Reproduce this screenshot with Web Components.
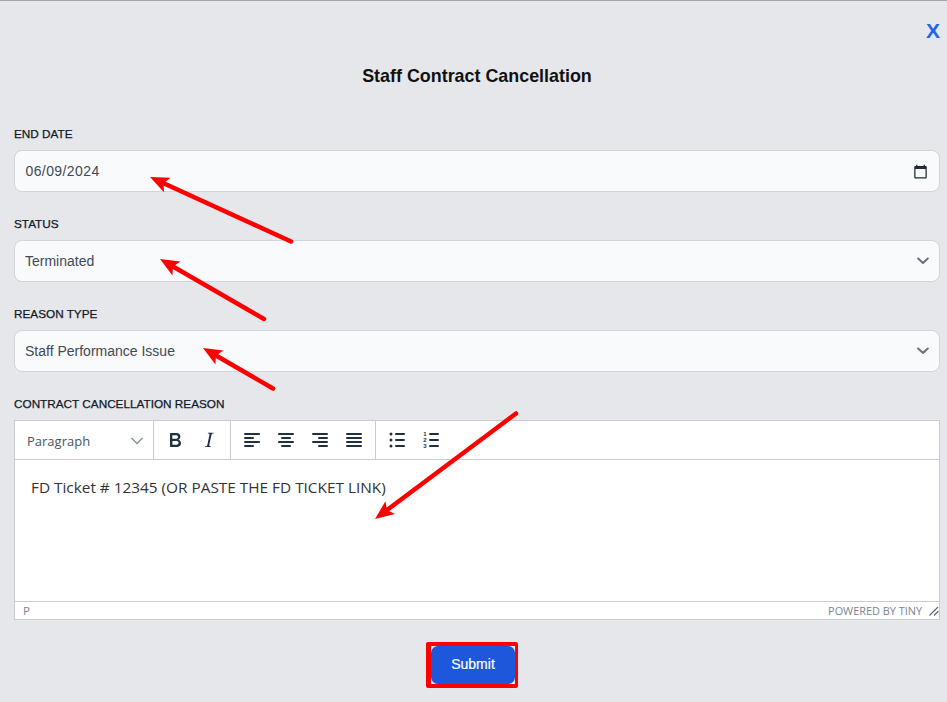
<!DOCTYPE html>
<html lang="en"><head><meta charset="utf-8"><title>Staff Contract Cancellation</title>
<style>
html,body{margin:0;padding:0;background:#e5e7eb;height:702px;overflow:hidden}
</style></head>
<body>
<template id="t-page"><style>
:host{display:flex;flex-direction:column;position:relative;box-sizing:border-box;width:947px;height:702px;padding:0 7px 0 14px;background:#e5e7eb;border-top:1px solid #a8a3a3;font-family:"Liberation Sans",Arial,sans-serif}
.close{display:flex;justify-content:flex-end;height:20px;margin-top:20px}
.close span{font:700 21px/20px "Liberation Sans",Arial,sans-serif;color:#2563eb}
h1{margin:23px 0 37px;text-align:center;font:700 17.9px/24px "Liberation Sans",Arial,sans-serif;color:#111}
.fields{display:flex;flex-direction:column;gap:23px}
.actions{display:flex;justify-content:center;padding-right:10px;margin-top:22px}
</style>
<div class="close"><span>X</span></div>
<h1>Staff Contract Cancellation</h1>
<div class="fields"><slot></slot></div>
<div class="actions"><slot name="actions"></slot></div>
<slot name="overlay"></slot></template>

<template id="t-field"><style>
:host{display:block}
label{display:block;font:400 11.75px/18px "Liberation Sans",Arial,sans-serif;-webkit-text-stroke:.25px #111827;color:#111827;margin-bottom:7px;text-transform:uppercase}
</style><label></label><slot></slot></template>

<template id="t-control"><style>
:host{display:flex;align-items:center;justify-content:space-between;box-sizing:border-box;height:42px;padding:0 10px;background:#f9fafb;border:1px solid #d1d5db;border-radius:8px;font:400 14px/20px "Liberation Sans",Arial,sans-serif;color:#414956}
:host([icon="date"]) .t{letter-spacing:.4px;padding-left:.5px}
svg{display:block;flex:none}
</style><span class="t"><slot></slot></span><span class="ic"></span></template>

<template id="t-editor"><style>
:host{display:flex;flex-direction:column;box-sizing:border-box;height:200px;background:#fff;border:1px solid #ccc;font-family:"Open Sans",sans-serif;color:#222f3e}
.bar{display:flex;height:38px;border-bottom:1px solid #ccc;flex:none}
.sel{box-sizing:border-box;width:139px;display:flex;align-items:center;justify-content:space-between;padding:1px 9px 0 12px;font-size:13px;color:#4a5562;border-right:1px solid #ccc}
.grp{display:flex;padding:0 4px;border-right:1px solid #ccc}
.grp:last-child{border-right:0}
.btn{width:34px;display:flex;align-items:center;justify-content:center}
svg{display:block;fill:#222f3e}
.body{flex:1;padding:16px 16px 0;font-size:15.35px;line-height:22px;color:#333}
.foot{display:flex;justify-content:space-between;align-items:center;box-sizing:border-box;height:18px;border-top:1px solid #ccc;flex:none;font-size:11.5px;line-height:17px;color:#7b8490;padding-left:8px}
.foot .r{display:flex;align-items:center;gap:7px;font-size:10.9px}
</style>
<div class="bar">
<div class="sel"><span>Paragraph</span><svg width="14" height="8" viewBox="0 0 14 8" style="fill:none;stroke:#8a929b;stroke-width:1.4"><path d="M1.5 1l5.5 5.5L12.500 1"/></svg></div>
<div class="grp">
<div class="btn"><svg width="24" height="24" viewBox="0 0 24 24"><path d="M7.800 19c-.3 0-.5 0-.6-.2l-.2-.5V5.700c0-.2 0-.4.2-.5l.6-.2h5c1.500 0 2.700.3 3.500 1 .7.6 1.100 1.400 1.100 2.500a3 3 0 0 1-.6 1.900c-.4.6-1 1-1.600 1.200.4.1.9.3 1.300.6s.8.7 1 1.200c.4.4.5 1 .5 1.600 0 1.300-.4 2.300-1.300 3-.8.7-2.100 1-3.800 1H7.800zm5-8.300c.6 0 1.200-.1 1.600-.5.4-.3.6-.7.6-1.300 0-1.100-.8-1.700-2.300-1.700H9.300v3.500h3.400zm.5 6c.7 0 1.300-.1 1.700-.4.4-.4.6-.9.6-1.500s-.2-1-.7-1.400c-.4-.3-1-.4-2-.4H9.400v3.800h4z"/></svg></div>
<div class="btn"><svg width="24" height="24" viewBox="0 0 24 24"><path d="M16.700 4.700l-.1.9h-.3c-.6 0-1 0-1.400.3-.3.3-.4.6-.5 1.100l-2.100 9.800v.6c0 .5.4.8 1.400.8h.2l-.2.8H8l.2-.8h.2c1.100 0 1.800-.5 2-1.500l2-9.800.1-.5c0-.6-.4-.8-1.400-.8h-.3l.2-.9h5.800z"/></svg></div>
</div>
<div class="grp">
<div class="btn"><svg width="24" height="24" viewBox="0 0 24 24"><rect x="4" y="5" width="16" height="2" rx="1"/><rect x="4" y="9" width="10" height="2" rx="1"/><rect x="4" y="13" width="16" height="2" rx="1"/><rect x="4" y="17" width="10" height="2" rx="1"/></svg></div>
<div class="btn"><svg width="24" height="24" viewBox="0 0 24 24"><rect x="4" y="5" width="16" height="2" rx="1"/><rect x="7" y="9" width="10" height="2" rx="1"/><rect x="4" y="13" width="16" height="2" rx="1"/><rect x="7" y="17" width="10" height="2" rx="1"/></svg></div>
<div class="btn"><svg width="24" height="24" viewBox="0 0 24 24"><rect x="4" y="5" width="16" height="2" rx="1"/><rect x="10" y="9" width="10" height="2" rx="1"/><rect x="4" y="13" width="16" height="2" rx="1"/><rect x="10" y="17" width="10" height="2" rx="1"/></svg></div>
<div class="btn"><svg width="24" height="24" viewBox="0 0 24 24"><rect x="4" y="5" width="16" height="2" rx="1"/><rect x="4" y="9" width="16" height="2" rx="1"/><rect x="4" y="13" width="16" height="2" rx="1"/><rect x="4" y="17" width="16" height="2" rx="1"/></svg></div>
</div>
<div class="grp">
<div class="btn"><svg width="24" height="24" viewBox="0 0 24 24"><circle cx="6" cy="6" r="1.500"/><circle cx="6" cy="12" r="1.500"/><circle cx="6" cy="18" r="1.500"/><rect x="10" y="5" width="10" height="2" rx="1"/><rect x="10" y="11" width="10" height="2" rx="1"/><rect x="10" y="17" width="10" height="2" rx="1"/></svg></div>
<div class="btn"><svg width="24" height="24" viewBox="0 0 24 24"><text x="6" y="8" text-anchor="middle" font-family="Liberation Sans" font-weight="700" font-size="6">1</text><text x="6" y="14" text-anchor="middle" font-family="Liberation Sans" font-weight="700" font-size="6">2</text><text x="6" y="20" text-anchor="middle" font-family="Liberation Sans" font-weight="700" font-size="6">3</text><rect x="10" y="5" width="10" height="2" rx="1"/><rect x="10" y="11" width="10" height="2" rx="1"/><rect x="10" y="17" width="10" height="2" rx="1"/></svg></div>
</div>
</div>
<div class="body"><slot></slot></div>
<div class="foot"><span>P</span><span class="r">POWERED BY TINY<svg width="10" height="10" viewBox="0 0 10 10" style="fill:none;stroke:#5a6470;stroke-width:1.100"><path d="M0.500 9.500L9 1M5 9.500L9.500 5"/></svg></span></div></template>

<template id="t-submit"><style>
:host{display:block;border:solid #ff0000;border-width:4px 3px 4px 5px;border-radius:2px;background:#e5e7eb}
button{display:block;box-sizing:border-box;width:84px;height:38px;margin:0;padding:0 0 2px;border:0;border-radius:7px;background:#1d57dc;color:#fff;font:400 14px/20px "Liberation Sans",Arial,sans-serif;-webkit-text-stroke:.2px #fff}
</style><button type="button"><slot></slot></button></template>

<template id="t-arrows"><style>
:host{position:absolute;left:0;top:-1px;width:947px;height:702px;pointer-events:none}
svg{display:block}
</style><svg width="947" height="702" viewBox="0 0 947 702"></svg></template>

<script>
function tpl(id){return document.getElementById(id).content.cloneNode(true)}
class BasePart extends HTMLElement{constructor(id){super();this.attachShadow({mode:'open'}).appendChild(tpl(id))}}
customElements.define('form-page',class extends BasePart{constructor(){super('t-page')}});
customElements.define('form-field',class extends BasePart{constructor(){super('t-field')}
 connectedCallback(){this.shadowRoot.querySelector('label').textContent=this.getAttribute('label')}});
const ICONS={
 date:'<svg width="15" height="15" viewBox="0 0 24 24" fill="#1f2937" style="margin-right:1px"><path d="M20 3h-1V1h-2v2H7V1H5v2H4c-1.100 0-2 .9-2 2v16c0 1.100.9 2 2 2h16c1.100 0 2-.9 2-2V5c0-1.100-.9-2-2-2zm0 18H4V8h16v13z"/></svg>',
 select:'<svg width="12" height="8" viewBox="0 0 12 8" fill="none" stroke="#6b7280" stroke-width="2" stroke-linecap="round" stroke-linejoin="round"><path d="M1.200 1.500L6 6l4.800-4.500"/></svg>'};
customElements.define('form-control',class extends BasePart{constructor(){super('t-control')}
 connectedCallback(){this.shadowRoot.querySelector('.ic').innerHTML=ICONS[this.getAttribute('icon')]}});
customElements.define('rich-editor',class extends BasePart{constructor(){super('t-editor')}});
customElements.define('submit-button',class extends BasePart{constructor(){super('t-submit')}});
customElements.define('arrow-layer',class extends BasePart{constructor(){super('t-arrows')}
 connectedCallback(){
  const A=[[291,241.500,150,177],[264,319,160,259],[273,388.500,203,348],[516,413.500,375,519]];
  let s='';
  for(const [x1,y1,x2,y2] of A){
   const dx=x2-x1,dy=y2-y1,L=Math.hypot(dx,dy),ux=dx/L,uy=dy/L,nx=-uy,ny=ux;
   const bx=x2-ux*19,by=y2-uy*19,mx=x2-ux*15,my=y2-uy*15;
   s+=`<line x1="${x1}" y1="${y1}" x2="${mx}" y2="${my}" stroke="#ff0000" stroke-width="4.500" stroke-linecap="round"/>`;
   s+=`<polygon fill="#ff0000" points="${x2},${y2} ${bx+nx*8},${by+ny*8} ${mx},${my} ${bx-nx*8},${by-ny*8}"/>`;
  }
  this.shadowRoot.querySelector('svg').innerHTML=s;
 }});
</script>

<form-page>
 <form-field label="End Date"><form-control icon="date">06/09/2024</form-control></form-field>
 <form-field label="Status"><form-control icon="select">Terminated</form-control></form-field>
 <form-field label="Reason Type"><form-control icon="select">Staff Performance Issue</form-control></form-field>
 <form-field label="Contract Cancellation Reason"><rich-editor>FD Ticket # 12345 (OR PASTE THE FD TICKET LINK)</rich-editor></form-field>
 <submit-button slot="actions">Submit</submit-button>
 <arrow-layer slot="overlay"></arrow-layer>
</form-page>
</body></html>
